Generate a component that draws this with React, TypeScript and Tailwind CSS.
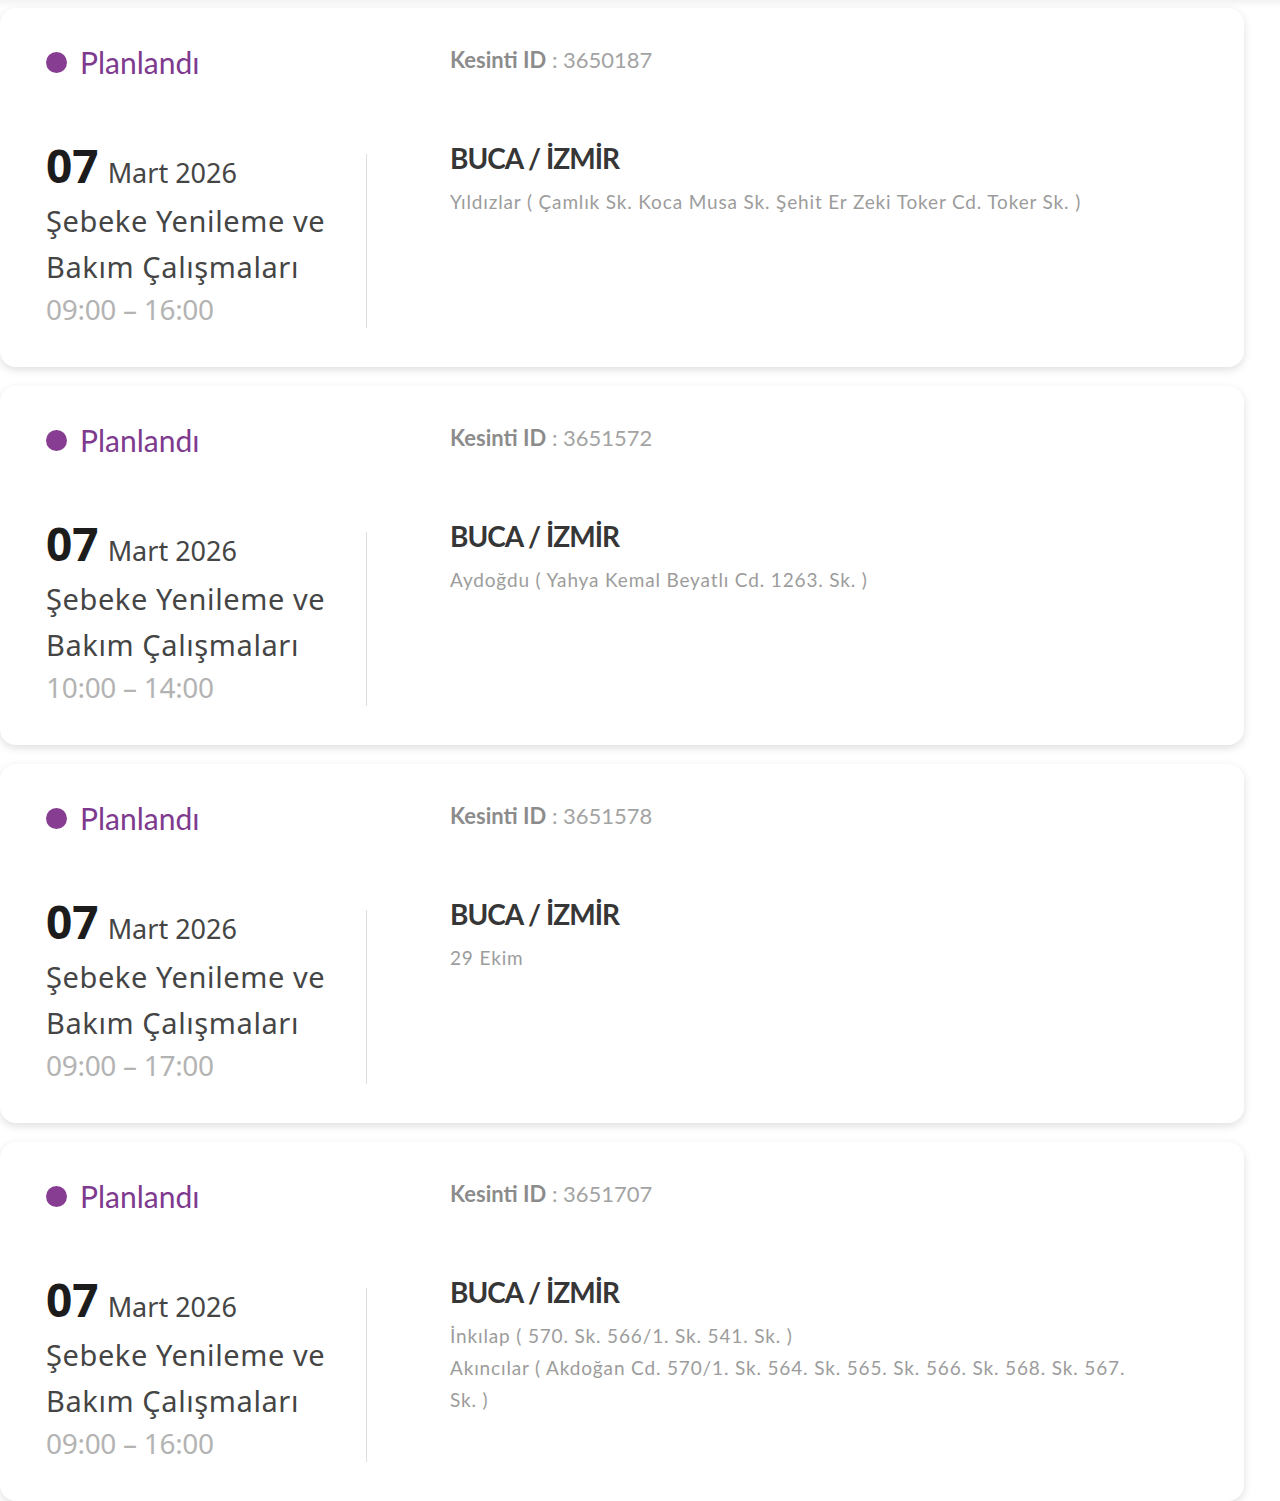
import React from "react";

type Outage = {
  id: string;
  time: string;
  lines: string[];
};

const outages: Outage[] = [
  {
    id: "3650187",
    time: "09:00 – 16:00",
    lines: ["Yıldızlar ( Çamlık Sk. Koca Musa Sk. Şehit Er Zeki Toker Cd. Toker Sk. )"],
  },
  {
    id: "3651572",
    time: "10:00 – 14:00",
    lines: ["Aydoğdu ( Yahya Kemal Beyatlı Cd. 1263. Sk. )"],
  },
  {
    id: "3651578",
    time: "09:00 – 17:00",
    lines: ["29 Ekim"],
  },
  {
    id: "3651707",
    time: "09:00 – 16:00",
    lines: [
      "İnkılap ( 570. Sk. 566/1. Sk. 541. Sk. )",
      "Akıncılar ( Akdoğan Cd. 570/1. Sk. 564. Sk. 565. Sk. 566. Sk. 568. Sk. 567. Sk. )",
    ],
  },
];

const humanist = { fontFamily: '"Noto Sans", "Open Sans", sans-serif' };
const geo = { fontFamily: 'Lato, "Liberation Sans", sans-serif' };

function OutageCard({ item }: { item: Outage }) {
  return (
    <div className="flex h-[359px] w-[1244px] shrink-0 rounded-2xl bg-white pl-[46px] shadow-[0_3px_9px_rgba(0,0,0,0.13)]">
      {/* left: status + date block */}
      <div className="flex flex-col">
        <div className="mt-[43px] flex h-[22px] items-center gap-[13px]">
          <span className="h-[21px] w-[21px] rounded-full bg-[#873d91]" />
          <span style={geo} className="text-[30px] leading-none text-[#7e3a8e]">Planlandı</span>
        </div>
        <div className="mt-[67px] flex items-start">
          <div style={humanist} className="w-[320px]">
            <div className="flex h-[50px] items-baseline gap-[9px] leading-[50px]">
              <span className="text-[46px] font-bold text-[#1c1c1c]">07</span>
              <span className="text-[27px] text-[#454545]">Mart 2026</span>
            </div>
            <div className="mt-[8px] text-[29px] leading-[46px] tracking-[0.6px] text-[#454545]">
              Şebeke Yenileme ve
              <br />
              Bakım Çalışmaları
            </div>
            <div className="mt-[1px] text-[28px] leading-[36px] tracking-[-0.3px] text-[#b3b3b3]">{item.time}</div>
          </div>
          <div className="mt-[14px] h-[174px] w-px bg-[#dedede]" />
        </div>
      </div>

      {/* right: id, place, streets */}
      <div style={geo} className="ml-[83px] flex w-[690px] flex-col">
        <div className="mt-[40px] h-[24px] text-[22px] leading-[24px]">
          <span className="font-bold text-[#8c8c8c]">Kesinti ID</span>
          <span className="text-[#a3a3a3]"> : {item.id}</span>
        </div>
        <div className="mt-[68px] text-[28px] font-bold leading-[36px] tracking-[-1px] text-[#363636]">
          BUCA / İZMİR
        </div>
        <div className="mt-[10px] text-[19px] leading-[32px] tracking-[0.85px] text-[#9c9c9c]">
          {item.lines.map((l) => (
            <div key={l}>{l}</div>
          ))}
        </div>
      </div>
    </div>
  );
}

export default function App() {
  return (
    <div className="min-h-[1501px] w-[1280px] overflow-hidden bg-white">
      <div className="h-2 bg-gradient-to-b from-[#f3f3f3] to-white" />
      <div className="flex flex-col gap-[19px]">
        {outages.map((o) => (
          <OutageCard key={o.id} item={o} />
        ))}
      </div>
    </div>
  );
}
